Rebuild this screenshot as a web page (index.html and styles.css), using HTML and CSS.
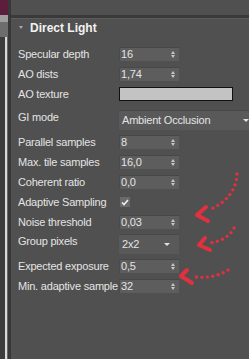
FILE: index.html
```html
<!DOCTYPE html>
<html>
<head>
<meta charset="utf-8">
<link rel="stylesheet" href="styles.css">
</head>
<body>
<div class="app">
  <div class="side">
    <div class="s-maroon"></div>
    <div class="s-light"></div>
    <div class="s-gray"></div>
    <div class="s-rest"><div class="s-dark"></div><div class="s-line"></div><div class="s-mid"></div></div>
  </div>
  <div class="divider"></div>
  <div class="panel">
    <div class="top"></div>
    <div class="band"></div>
    <div class="head"><span class="tri"></span><span class="title">Direct Light</span></div>
    <div class="rows">
      <div class="row"><span class="label">Specular depth</span><span class="spin"><span class="val">16</span><span class="arr"><i class="up"></i><i class="dn"></i></span></span></div>
      <div class="row"><span class="label">AO dists</span><span class="spin"><span class="val">1,74</span><span class="arr"><i class="up"></i><i class="dn"></i></span></span></div>
      <div class="row"><span class="label">AO texture</span><span class="swatch"></span></div>
      <div class="row row-dd"><span class="label">GI mode</span><span class="dd dd-wide"><span class="val">Ambient Occlusion</span><i class="dd-arr"></i></span></div>
      <div class="row"><span class="label">Parallel samples</span><span class="spin"><span class="val">8</span><span class="arr"><i class="up"></i><i class="dn"></i></span></span></div>
      <div class="row"><span class="label">Max. tile samples</span><span class="spin"><span class="val">16,0</span><span class="arr"><i class="up"></i><i class="dn"></i></span></span></div>
      <div class="row"><span class="label">Coherent ratio</span><span class="spin"><span class="val">0,0</span><span class="arr"><i class="up"></i><i class="dn"></i></span></span></div>
      <div class="row"><span class="label">Adaptive Sampling</span><span class="check"><svg width="8" height="7" viewBox="0 0 8 7"><path d="M1 3.5 L3 5.5 L7 1" fill="none" stroke="#f0f0f0" stroke-width="1.6"/></svg></span></div>
      <div class="row"><span class="label">Noise threshold</span><span class="spin"><span class="val">0,03</span><span class="arr"><i class="up"></i><i class="dn"></i></span></span></div>
      <div class="row row-dd2"><span class="label">Group pixels</span><span class="dd dd-small"><span class="val">2x2</span><i class="dd-arr"></i></span></div>
      <div class="row"><span class="label">Expected exposure</span><span class="spin"><span class="val">0,5</span><span class="arr"><i class="up"></i><i class="dn"></i></span></span></div>
      <div class="row"><span class="label">Min. adaptive sample</span><span class="spin"><span class="val">32</span><span class="arr"><i class="up"></i><i class="dn"></i></span></span></div>
    </div>
  </div>
  <svg class="arrows" width="249" height="359" viewBox="0 0 249 359">
    <g fill="none" stroke="#e3303f" stroke-linecap="round" stroke-linejoin="round">
      <path d="M237 174 Q236 198 209 210" stroke-width="3.4" stroke-dasharray="0 5.5"/>
      <path d="M206 207 L197 215 L208 221" stroke-width="4"/>
      <path d="M234 228 Q228 240 210 243" stroke-width="3.4" stroke-dasharray="0 5.5"/>
      <path d="M205 238 L199 245 L210 250" stroke-width="4"/>
      <path d="M228 270 Q214 279 196 277" stroke-width="3.4" stroke-dasharray="0 5.5"/>
      <path d="M187 270 L181 276 L192 283" stroke-width="4"/>
    </g>
  </svg>
</div>
</body>
</html>
```
FILE: styles.css
```css
* { box-sizing: border-box; }
html, body { margin: 0; padding: 0; }
body {
  width: 249px;
  height: 359px;
  overflow: hidden;
  background: #505050;
  font-family: "Liberation Sans", Arial, sans-serif;
  font-size: 11px;
  color: #e4e4e4;
}
.app {
  position: relative;
  display: flex;
  width: 249px;
  height: 359px;
}
.side {
  width: 10px;
  display: flex;
  flex-direction: column;
}
.s-maroon { height: 15px; background: #5b1f3d; }
.s-light { height: 7px; background: #9e9e9e; }
.s-gray { height: 15px; background: #6d6d6d; }
.s-rest {
  flex: 1;
  display: flex;
  background: #5a5a5a;
}
.s-dark { width: 5px; background: #3c3c3c; }
.s-line { width: 2px; background: #d9d9d9; }
.s-mid { flex: 1; background: #666; }
.divider { width: 3px; background: #383838; }
.panel {
  flex: 1;
  display: flex;
  flex-direction: column;
  background: #505050;
}
.top { height: 15px; }
.band { height: 4px; background: #3a3a3a; border-bottom: 1px solid #5c5c5c; }
.head {
  height: 25px;
  display: flex;
  align-items: flex-start;
  padding-top: 2px;
  padding-left: 8px;
}
.tri {
  width: 0; height: 0;
  margin-top: 5px;
  border-left: 2.5px solid transparent;
  border-right: 2.5px solid transparent;
  border-top: 3px solid #a8a8a8;
}
.title {
  margin-left: 7px;
  font-weight: bold;
  font-size: 12px;
  line-height: 14px;
  color: #f2f2f2;
}
.rows {
  display: flex;
  flex-direction: column;
  padding-left: 7px;
}
.row {
  height: 20px;
  display: flex;
  align-items: center;
}
.label {
  width: 101px;
  flex: none;
  line-height: 20px;
  letter-spacing: -0.2px;
  white-space: nowrap;
  overflow: hidden;
}
.spin {
  width: 60px;
  height: 14px;
  display: flex;
  align-items: center;
  justify-content: space-between;
  background: #5d5d5d;
  border-top: 1px solid #474747;
  border-left: 1px solid #4a4a4a;
  padding-left: 1px;
  padding-right: 4px;
}
.val {
  line-height: 13px;
  letter-spacing: -0.2px;
  white-space: nowrap;
}
.arr {
  display: flex;
  flex-direction: column;
  gap: 1px;
}
.up, .dn {
  display: block;
  width: 0; height: 0;
  border-left: 2px solid transparent;
  border-right: 2px solid transparent;
}
.up { border-bottom: 3px solid #c8c8c8; }
.dn { border-top: 3px solid #c8c8c8; }
.swatch {
  width: 114px;
  height: 14px;
  background: #c3c3c3;
  border: 1px solid #111;
}
.row-dd { height: 28px; align-items: flex-start; }
.row-dd .label { margin-top: 3px; line-height: 20px; }
.row-dd .dd { margin-top: 6px; }
.row-dd2 { height: 24px; align-items: flex-start; }
.row-dd2 .label { margin-top: -1px; line-height: 20px; }
.row-dd2 .dd { margin-top: 2px; }
.dd {
  height: 20px;
  display: flex;
  align-items: center;
  justify-content: space-between;
  background: #595959;
  border-top: 1px solid #484848;
  padding-left: 3px;
}
.dd-wide { width: 130px; flex: none; padding-right: 0; }
.dd-small { width: 60px; padding-right: 9px; }
.dd-arr {
  display: block;
  width: 0; height: 0;
  border-left: 3px solid transparent;
  border-right: 3px solid transparent;
  border-top: 3px solid #e0e0e0;
}
.check {
  width: 10px;
  height: 10px;
  margin-left: 1px;
  display: flex;
  align-items: center;
  justify-content: center;
  background: #6a6a6a;
}
.arrows {
  position: absolute;
  left: 0;
  top: 0;
  pointer-events: none;
}
```
